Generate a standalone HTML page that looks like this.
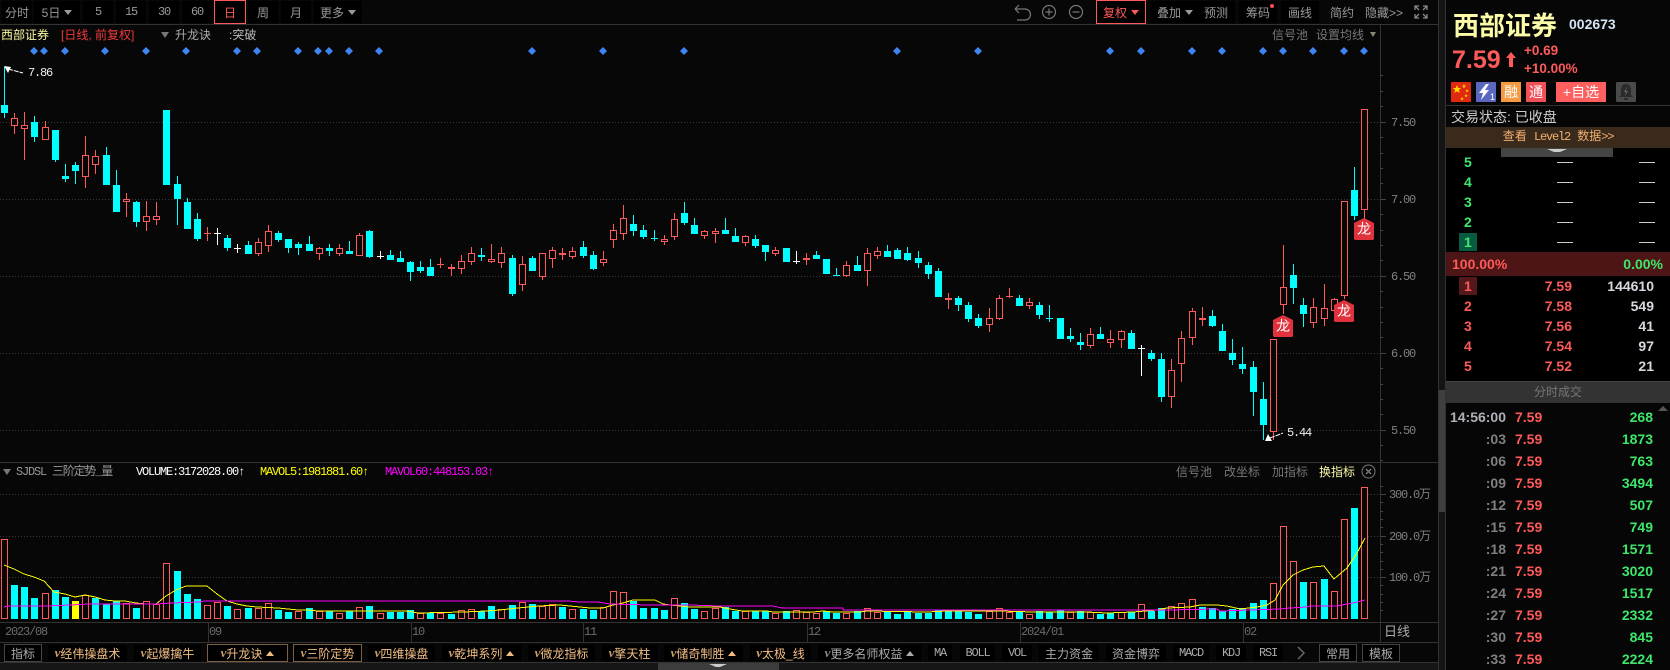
<!DOCTYPE html>
<html><head><meta charset="utf-8"><style>
html,body{margin:0;padding:0;background:#070707;width:1670px;height:670px;overflow:hidden}
body{position:relative;font-family:"Liberation Sans","WenQuanYi Zen Hei","Noto Sans CJK SC",sans-serif;font-size:12px;color:#999}
.a{position:absolute;white-space:nowrap;line-height:1}
.b{position:absolute;top:1px;height:22px;background:#000;color:#999;display:flex;align-items:center;justify-content:center;white-space:nowrap;font-size:12px}
.l{position:absolute;background:#333}
.m{font-family:"Liberation Mono","WenQuanYi Zen Hei",monospace;letter-spacing:-1.2px}
.tb{position:absolute;top:645px;height:16px;background:#000;color:#f2bd84;display:flex;align-items:center;justify-content:center;white-space:nowrap;font-size:12px;box-sizing:border-box}
.tb i{color:#c9a06a;font-weight:bold;font-size:13px;margin-right:0;font-family:"Liberation Serif",serif}
.g{color:#aaa}.g i{color:#888}
.bx{border:1px solid #7c5f3e;top:644px;height:18px}
.gb{border:1px solid #444;top:644px;height:18px;color:#aaa;background:#000}
.n{font-family:"Liberation Sans",sans-serif;font-weight:bold;font-size:14px;line-height:14px;position:absolute;white-space:nowrap}
.r{color:#ff5a5a}.gn{color:#3ee66a}.w{color:#d8d8e0}.gy{color:#808080}
.dn{display:inline-block;width:0;height:0;border-left:4px solid transparent;border-right:4px solid transparent;border-top:5px solid currentColor;margin-left:4px}
.up{display:inline-block;width:0;height:0;border-left:4px solid transparent;border-right:4px solid transparent;border-bottom:5px solid currentColor;margin-left:4px}
</style></head><body>

<!-- toolbar -->
<div class="b" style="left:2px;width:30px">分时</div>
<div class="b" style="left:34px;width:46px">5日<span class="dn"></span></div>
<div class="b m" style="left:83px;width:30px">5</div>
<div class="b m" style="left:116px;width:30px">15</div>
<div class="b m" style="left:149px;width:30px">30</div>
<div class="b m" style="left:182px;width:30px">60</div>
<div class="b" style="left:214px;width:32px;top:0;height:24px;box-sizing:border-box;border:1px solid #ff5a5a;color:#ff5a5a">日</div>
<div class="b" style="left:248px;width:30px">周</div>
<div class="b" style="left:281px;width:30px">月</div>
<div class="b" style="left:314px;width:48px">更多<span class="dn"></span></div>

<svg class="a" style="left:1008px;top:2px" width="82" height="22" fill="none" stroke="#777" stroke-width="1.200">
<path d="M7 10h10a5.500 5.500 0 0 1 0 11h-8M7 10l4-4M7 10l4 4" transform="translate(0,-3)"/>
<circle cx="41" cy="10" r="6.500"/><path d="M37.500 10h7M41 6.500v7"/>
<circle cx="68" cy="10" r="6.500"/><path d="M64.500 10h7"/>
</svg>
<div class="b" style="left:1096px;width:50px;top:0;height:24px;box-sizing:border-box;border:1px solid #ff5a5a;color:#ff5a5a">复权<span class="dn"></span></div>
<div class="b" style="left:1150px;width:50px">叠加<span class="dn"></span></div>
<div class="b" style="left:1197px;width:38px">预测</div>
<div class="b" style="left:1239px;width:38px">筹码</div>
<div class="a" style="left:1270px;top:4px;width:4px;height:4px;border-radius:2px;background:#ff4c4c"></div>
<div class="b" style="left:1281px;width:38px">画线</div>
<div class="b" style="left:1323px;width:38px;background:none">简约</div>
<div class="b" style="left:1365px;width:38px;background:none;justify-content:flex-start">隐藏&gt;&gt;</div>
<svg class="a" style="left:1414px;top:5px" width="14" height="14" fill="none" stroke="#888" stroke-width="1.300"><path d="M1 5V1h4M9 1h4v4M13 9v4H9M5 13H1V9M1 1l4 4M13 1L9 5M13 13L9 9M1 13l4-4"/></svg>

<!-- structural lines -->
<div class="l" style="left:0;top:24px;width:1438px;height:1px"></div>
<div class="l" style="left:0;top:462px;width:1438px;height:1px"></div>
<div class="l" style="left:0;top:622px;width:1438px;height:1px"></div>
<div class="l" style="left:0;top:642px;width:1438px;height:1px"></div>
<div class="l" style="left:0;top:662px;width:1438px;height:1px"></div>
<div class="l" style="left:1380px;top:25px;width:1px;height:617px"></div>
<div class="l" style="left:1438px;top:0;width:1px;height:670px"></div>
<div class="l" style="left:208px;top:622px;width:1px;height:20px"></div>
<div class="l" style="left:411px;top:622px;width:1px;height:20px"></div>
<div class="l" style="left:583px;top:622px;width:1px;height:20px"></div>
<div class="l" style="left:807px;top:622px;width:1px;height:20px"></div>
<div class="l" style="left:1020px;top:622px;width:1px;height:20px"></div>
<div class="l" style="left:1243px;top:622px;width:1px;height:20px"></div>

<!-- chart header -->
<div class="a" style="left:1px;top:29px;color:#f8f8a0">西部证券</div>
<div class="a" style="left:61px;top:29px;color:#f03a3a">[日线, 前复权]</div>
<div class="a" style="left:161px;top:32px;width:0;height:0;border-left:4px solid transparent;border-right:4px solid transparent;border-top:6px solid #777"></div>
<div class="a" style="left:175px;top:29px;color:#aaa">升龙诀</div>
<div class="a" style="left:229px;top:29px;color:#bbb">:突破</div>
<div class="a" style="left:1272px;top:29px;color:#777">信号池</div>
<div class="a" style="left:1316px;top:29px;color:#777">设置均线</div>
<div class="a" style="left:1370px;top:32px;width:0;height:0;border-left:3px solid transparent;border-right:3px solid transparent;border-top:5px solid #887"></div>

<!-- chart svg -->
<svg class="a" style="left:0;top:0" width="1438" height="670" shape-rendering="crispEdges">
<g stroke="#383838" stroke-dasharray="1 2"><path d="M0 122.500H1380M0 199.500H1380M0 276.500H1380M0 353.500H1380M0 430.500H1380M0 494.500H1380M0 536.500H1380M0 577.500H1380"/></g>
<path stroke="#444" d="M1380 122.500h6M1380 199.500h6M1380 276.500h6M1380 353.500h6M1380 430.500h6M1380 494.500h6M1380 536.500h6M1380 577.500h6M1380 75.500h3M1380 91.500h3M1380 106.500h3M1380 137.500h3M1380 153.500h3M1380 168.500h3M1380 183.500h3M1380 214.500h3M1380 230.500h3M1380 245.500h3M1380 260.500h3M1380 291.500h3M1380 307.500h3M1380 322.500h3M1380 337.500h3M1380 368.500h3M1380 384.500h3M1380 399.500h3M1380 414.500h3M1380 445.500h3M1380 460.500h3M1380 486.500h3M1380 502.500h3M1380 511.500h3M1380 519.500h3M1380 527.500h3M1380 544.500h3M1380 552.500h3M1380 561.500h3M1380 569.500h3M1380 585.500h3M1380 594.500h3M1380 602.500h3M1380 610.500h3"/>
<!-- diamonds -->
<path shape-rendering="auto" fill="#3d85f2" d="M34 47l4 4-4 4-4-4zM44 47l4 4-4 4-4-4zM65 47l4 4-4 4-4-4zM105 47l4 4-4 4-4-4zM146 47l4 4-4 4-4-4zM186 47l4 4-4 4-4-4zM237 47l4 4-4 4-4-4zM257 47l4 4-4 4-4-4zM298 47l4 4-4 4-4-4zM318 47l4 4-4 4-4-4zM329 47l4 4-4 4-4-4zM349 47l4 4-4 4-4-4zM379 47l4 4-4 4-4-4zM532 47l4 4-4 4-4-4zM603 47l4 4-4 4-4-4zM684 47l4 4-4 4-4-4zM897 47l4 4-4 4-4-4zM978 47l4 4-4 4-4-4zM1110 47l4 4-4 4-4-4zM1141 47l4 4-4 4-4-4zM1192 47l4 4-4 4-4-4zM1222 47l4 4-4 4-4-4zM1263 47l4 4-4 4-4-4zM1283 47l4 4-4 4-4-4zM1313 47l4 4-4 4-4-4zM1344 47l4 4-4 4-4-4zM1364 47l4 4-4 4-4-4z"/>
<!-- cyan candles -->
<path fill="#00ffff" d="M4 67h1V118h-1zM1 105h7V113h-7zM34 116h1V142h-1zM31 122h7V137h-7zM55 130h1V162h-1zM52 130h7V160h-7zM65 164h1V182h-1zM62 176h7V179h-7zM75 162h1V184h-1zM72 165h7V171h-7zM106 147h1V185h-1zM103 155h7V185h-7zM116 170h1V212h-1zM113 185h7V212h-7zM136 201h1V227h-1zM133 202h7V222h-7zM163 110h7V185h-7zM177 176h1V225h-1zM174 184h7V199h-7zM187 198h1V229h-1zM184 202h7V229h-7zM197 213h1V241h-1zM194 219h7V239h-7zM227 235h1V251h-1zM224 238h7V248h-7zM248 241h1V254h-1zM245 245h7V254h-7zM278 231h1V242h-1zM275 233h7V240h-7zM288 239h1V253h-1zM285 239h7V248h-7zM298 242h1V255h-1zM295 244h7V248h-7zM309 236h1V251h-1zM306 244h7V251h-7zM329 244h1V256h-1zM326 248h7V251h-7zM349 241h1V254h-1zM346 251h7V254h-7zM369 230h1V258h-1zM366 231h7V257h-7zM390 250h1V260h-1zM387 255h7V260h-7zM400 251h1V262h-1zM397 258h7V262h-7zM410 261h1V281h-1zM407 262h7V272h-7zM420 261h1V273h-1zM417 267h7V271h-7zM430 259h1V276h-1zM427 267h7V276h-7zM481 248h1V261h-1zM478 255h7V257h-7zM512 255h1V296h-1zM509 258h7V294h-7zM532 256h1V271h-1zM529 258h7V271h-7zM583 241h1V258h-1zM580 247h7V256h-7zM593 251h1V270h-1zM590 255h7V269h-7zM633 215h1V236h-1zM630 224h7V231h-7zM643 225h1V239h-1zM640 230h7V237h-7zM654 230h1V241h-1zM651 238h7V239h-7zM684 202h1V225h-1zM681 213h7V223h-7zM694 218h1V234h-1zM691 225h7V234h-7zM725 218h1V234h-1zM722 230h7V234h-7zM735 228h1V242h-1zM732 236h7V242h-7zM755 235h1V248h-1zM752 239h7V246h-7zM765 245h1V261h-1zM762 245h7V252h-7zM783 248h7V262h-7zM816 251h1V259h-1zM813 255h7V259h-7zM823 259h7V274h-7zM836 268h1V276h-1zM833 275h7V276h-7zM857 256h1V271h-1zM854 265h7V271h-7zM887 245h1V257h-1zM884 251h7V257h-7zM897 248h1V259h-1zM894 250h7V259h-7zM907 247h1V261h-1zM904 253h7V260h-7zM918 251h1V268h-1zM915 258h7V263h-7zM928 262h1V279h-1zM925 265h7V274h-7zM938 268h1V297h-1zM935 271h7V297h-7zM958 296h1V311h-1zM955 298h7V305h-7zM968 302h1V322h-1zM965 305h7V319h-7zM978 314h1V328h-1zM975 318h7V326h-7zM1019 295h1V306h-1zM1016 298h7V306h-7zM1039 302h1V319h-1zM1036 305h7V315h-7zM1049 305h1V322h-1zM1046 318h7V319h-7zM1057 318h7V339h-7zM1070 328h1V342h-1zM1067 336h7V339h-7zM1080 333h1V350h-1zM1077 342h7V345h-7zM1100 327h1V339h-1zM1097 334h7V339h-7zM1131 330h1V349h-1zM1128 333h7V349h-7zM1151 350h1V361h-1zM1148 353h7V359h-7zM1161 353h1V402h-1zM1158 359h7V397h-7zM1212 310h1V327h-1zM1209 316h7V326h-7zM1219 331h7V351h-7zM1222 324h1V331h-1zM1232 339h1V365h-1zM1229 353h7V360h-7zM1242 347h1V374h-1zM1239 364h7V369h-7zM1253 361h1V416h-1zM1250 367h7V392h-7zM1263 382h1V440h-1zM1260 399h7V425h-7zM1293 264h1V304h-1zM1290 275h7V288h-7zM1303 298h1V327h-1zM1300 305h7V314h-7zM1354 167h1V220h-1zM1351 190h7V216h-7z"/>
<!-- red wicks & dojis -->
<path fill="#ff5a5a" d="M14 113h1V134h-1zM24 112h1V160h-1zM45 121h1V140h-1zM85 136h1V188h-1zM95 150h1V174h-1zM126 193h1V217h-1zM146 201h1V231h-1zM156 202h1V225h-1zM207 227h1V241h-1zM204 233h7v1h-7zM258 238h1V256h-1zM268 225h1V252h-1zM319 247h1V260h-1zM339 244h1V256h-1zM359 233h1V256h-1zM440 258h1V268h-1zM437 264h7v1h-7zM451 264h1V276h-1zM448 267h7v2h-7zM461 255h1V274h-1zM471 247h1V265h-1zM491 244h1V263h-1zM501 247h1V268h-1zM522 256h1V291h-1zM542 253h1V280h-1zM552 247h1V268h-1zM562 248h1V260h-1zM572 247h1V259h-1zM603 251h1V266h-1zM613 224h1V248h-1zM623 205h1V240h-1zM664 235h1V245h-1zM674 213h1V240h-1zM704 230h1V239h-1zM715 228h1V243h-1zM745 235h1V246h-1zM775 247h1V256h-1zM806 253h1V265h-1zM803 258h7v2h-7zM846 261h1V277h-1zM867 248h1V286h-1zM877 247h1V259h-1zM948 293h1V309h-1zM945 298h7v2h-7zM989 308h1V332h-1zM999 295h1V320h-1zM1009 288h1V298h-1zM1006 296h7v1h-7zM1029 298h1V309h-1zM1090 328h1V348h-1zM1110 330h1V348h-1zM1121 330h1V348h-1zM1171 359h1V408h-1zM1181 331h1V382h-1zM1192 308h1V345h-1zM1202 307h1V326h-1zM1199 318h7v2h-7zM1273 432h1V440h-1zM1283 245h1V314h-1zM1313 298h1V328h-1zM1324 284h1V326h-1zM1334 298h1V311h-1zM1344 296h1V299h-1zM1364 210h1V219h-1z"/>
<!-- red bodies -->
<path fill="#070707" stroke="#ff5a5a" d="M11.500 118.500h6V125.500h-6zM21.500 125.500h6V128.500h-6zM42.500 127.500h6V139.500h-6zM82.500 155.500h6V176.500h-6zM92.500 156.500h6V164.500h-6zM123.500 199.500h6V201.500h-6zM143.500 216.500h6V221.500h-6zM153.500 216.500h6V219.500h-6zM255.500 242.500h6V253.500h-6zM265.500 231.500h6V245.500h-6zM316.500 248.500h6V253.500h-6zM336.500 248.500h6V253.500h-6zM356.500 235.500h6V255.500h-6zM458.500 261.500h6V268.500h-6zM468.500 253.500h6V261.500h-6zM488.500 259.500h6V261.500h-6zM498.500 253.500h6V262.500h-6zM519.500 264.500h6V284.500h-6zM539.500 253.500h6V276.500h-6zM549.500 250.500h6V258.500h-6zM559.500 253.500h6V254.500h-6zM569.500 251.500h6V256.500h-6zM600.500 259.500h6V262.500h-6zM610.500 230.500h6V239.500h-6zM620.500 218.500h6V233.500h-6zM661.500 239.500h6V241.500h-6zM671.500 219.500h6V236.500h-6zM701.500 231.500h6V235.500h-6zM712.500 231.500h6V233.500h-6zM742.500 236.500h6V242.500h-6zM772.500 250.500h6V253.500h-6zM843.500 265.500h6V275.500h-6zM864.500 253.500h6V270.500h-6zM874.500 251.500h6V255.500h-6zM986.500 318.500h6V324.500h-6zM996.500 298.500h6V318.500h-6zM1026.500 302.500h6V305.500h-6zM1087.500 334.500h6V345.500h-6zM1107.500 339.500h6V342.500h-6zM1118.500 331.500h6V339.500h-6zM1168.500 370.500h6V396.500h-6zM1178.500 338.500h6V363.500h-6zM1189.500 311.500h6V337.500h-6zM1270.500 339.500h6V431.500h-6zM1280.500 287.500h6V304.500h-6zM1310.500 307.500h6V322.500h-6zM1321.500 308.500h6V318.500h-6zM1331.500 299.500h6V310.500h-6zM1341.500 201.500h6V295.500h-6zM1361.500 109.500h6V209.500h-6z"/>
<!-- white dojis -->
<path fill="#fff" d="M217 228h1V245h-1zM214 233h7v1h-7zM237 244h1V253h-1zM234 248h7v1h-7zM380 251h1V259h-1zM377 256h7v1h-7zM796 251h1V264h-1zM793 261h7v1h-7zM1141 345h1V376h-1zM1138 348h7v1h-7z"/>
<!-- high/low arrows -->
<path shape-rendering="auto" fill="#fff" d="M4 66l7 1-3 6zM1265 441l3-7 4 7z"/>
<path shape-rendering="auto" stroke="#fff" fill="none" d="M8 69l15 4M1270 438l13-5" stroke-dasharray="5 1"/>

<!-- volume -->
<path fill="#00ffff" d="M11 585h7V619h-7zM21 587h7V619h-7zM31 598h7V619h-7zM52 590h7V619h-7zM62 597h7V619h-7zM92 598h7V619h-7zM103 604h7V619h-7zM113 601h7V619h-7zM133 608h7V619h-7zM174 571h7V619h-7zM184 594h7V619h-7zM194 599h7V619h-7zM224 606h7V619h-7zM245 608h7V619h-7zM275 610h7V619h-7zM285 612h7V619h-7zM306 608h7V619h-7zM326 611h7V619h-7zM346 611h7V619h-7zM366 606h7V619h-7zM387 612h7V619h-7zM397 612h7V619h-7zM407 610h7V619h-7zM427 613h7V619h-7zM448 614h7V619h-7zM478 611h7V619h-7zM488 606h7V619h-7zM509 605h7V619h-7zM529 604h7V619h-7zM559 607h7V619h-7zM580 609h7V619h-7zM590 610h7V619h-7zM630 601h7V619h-7zM640 608h7V619h-7zM651 608h7V619h-7zM661 610h7V619h-7zM681 603h7V619h-7zM691 609h7V619h-7zM722 607h7V619h-7zM732 611h7V619h-7zM752 611h7V619h-7zM762 611h7V619h-7zM783 611h7V619h-7zM823 611h7V619h-7zM833 613h7V619h-7zM854 611h7V619h-7zM884 611h7V619h-7zM894 614h7V619h-7zM904 611h7V619h-7zM915 613h7V619h-7zM925 613h7V619h-7zM935 610h7V619h-7zM945 610h7V619h-7zM955 611h7V619h-7zM965 612h7V619h-7zM975 614h7V619h-7zM1016 611h7V619h-7zM1036 611h7V619h-7zM1046 612h7V619h-7zM1057 610h7V619h-7zM1077 611h7V619h-7zM1097 614h7V619h-7zM1107 613h7V619h-7zM1128 612h7V619h-7zM1148 611h7V619h-7zM1158 608h7V619h-7zM1199 607h7V619h-7zM1209 608h7V619h-7zM1219 611h7V619h-7zM1229 609h7V619h-7zM1239 608h7V619h-7zM1250 603h7V619h-7zM1260 600h7V619h-7zM1300 582h7V619h-7zM1321 579h7V619h-7zM1351 508h7V619h-7z"/>
<path fill="#ffff00" d="M72 601h7V619h-7z"/>
<path fill="#070707" stroke="#ff5a5a" d="M1.500 539.500h6V618.500h-6zM42.500 593.500h6V618.500h-6zM82.500 595.500h6V618.500h-6zM123.500 603.500h6V618.500h-6zM143.500 601.500h6V618.500h-6zM153.500 604.500h6V618.500h-6zM163.500 563.500h6V618.500h-6zM204.500 605.500h6V618.500h-6zM214.500 602.500h6V618.500h-6zM234.500 609.500h6V618.500h-6zM255.500 608.500h6V618.500h-6zM265.500 603.500h6V618.500h-6zM295.500 611.500h6V618.500h-6zM316.500 611.500h6V618.500h-6zM336.500 613.500h6V618.500h-6zM356.500 607.500h6V618.500h-6zM377.500 613.500h6V618.500h-6zM417.500 613.500h6V618.500h-6zM437.500 613.500h6V618.500h-6zM458.500 610.500h6V618.500h-6zM468.500 609.500h6V618.500h-6zM498.500 609.500h6V618.500h-6zM519.500 602.500h6V618.500h-6zM539.500 606.500h6V618.500h-6zM549.500 604.500h6V618.500h-6zM569.500 609.500h6V618.500h-6zM600.500 607.500h6V618.500h-6zM610.500 591.500h6V618.500h-6zM620.500 592.500h6V618.500h-6zM671.500 598.500h6V618.500h-6zM701.500 611.500h6V618.500h-6zM712.500 608.500h6V618.500h-6zM742.500 611.500h6V618.500h-6zM772.500 613.500h6V618.500h-6zM793.500 610.500h6V618.500h-6zM803.500 612.500h6V618.500h-6zM813.500 613.500h6V618.500h-6zM843.500 613.500h6V618.500h-6zM864.500 608.500h6V618.500h-6zM874.500 612.500h6V618.500h-6zM986.500 611.500h6V618.500h-6zM996.500 608.500h6V618.500h-6zM1006.500 612.500h6V618.500h-6zM1026.500 614.500h6V618.500h-6zM1067.500 612.500h6V618.500h-6zM1087.500 612.500h6V618.500h-6zM1118.500 612.500h6V618.500h-6zM1138.500 604.500h6V618.500h-6zM1168.500 606.500h6V618.500h-6zM1178.500 603.500h6V618.500h-6zM1189.500 599.500h6V618.500h-6zM1270.500 583.500h6V618.500h-6zM1280.500 526.500h6V618.500h-6zM1290.500 561.500h6V618.500h-6zM1310.500 582.500h6V618.500h-6zM1331.500 591.500h6V618.500h-6zM1341.500 519.500h6V618.500h-6zM1361.500 487.500h6V618.500h-6z"/>
<polyline fill="none" stroke="#ffff00" points="4,565 14,569 24,574 34,577 44,581 54,592 65,594 75,597 85,595 95,597 105,600 115,601 125,601 136,603 146,604 156,604 166,596 176,590 186,586 207,586 217,594 227,601 237,604 247,606 257,607 278,608 288,609 298,610 308,610 318,611 368,611 407,611 418,613 464,612 486,611 500,610 518,608 539,606 560,605 570,606 580,607 590,608 603,608 613,605 623,603 633,600 655,600 663,604 670,605 690,607 720,607 730,609 742,611 767,611 773,612 813,612 823,611 833,612 860,612 867,611 927,612 947,611 980,611 1000,611 1033,612 1047,612 1087,612 1107,613 1133,612 1157,610 1167,608 1190,607 1200,605 1217,605 1227,606 1240,609 1257,607 1267,605 1275,600 1283,585 1293,575 1303,570 1313,567 1324,566 1334,579 1347,568 1357,553 1365,538"/>
<polyline fill="none" stroke="#ff00ff" points="4,607 9,606 46,606 71,605 89,604 157,604 171,603 200,602 204,601 560,601 568,601 580,602 598,602 610,604 650,605 690,605 720,606 773,606 782,608 843,608 843,610 1157,610 1167,610 1217,609 1220,611 1280,609 1290,608 1307,607 1310,606 1337,606 1347,604 1353,603 1365,600"/>
<!-- 龙 badges -->
<path shape-rendering="auto" fill="#e0323c" d="M1283 315l10 5v16l-1 1h-18l-1-1v-16zM1344 300l10 5v16l-1 1h-18l-1-1v-16zM1364 218l10 5v16l-1 1h-18l-1-1v-16z"/>
<!-- bottom scrollbar -->
<rect x="0" y="663" width="658" height="7" fill="#161616"/><rect x="779" y="663" width="659" height="7" fill="#161616"/>
<rect x="658" y="663" width="121" height="7" fill="#3c3c3c"/>
<path shape-rendering="auto" fill="#ccc" d="M709 664h18l-7 3h-4z"/>
</svg>

<div class="a" style="left:1276px;top:319px;color:#fff;font-size:14px">龙</div>
<div class="a" style="left:1337px;top:304px;color:#fff;font-size:14px">龙</div>
<div class="a" style="left:1357px;top:222px;color:#fff;font-size:14px">龙</div>

<div class="a m" style="left:28px;top:67px;color:#eee;">7.86</div>
<div class="a m" style="left:1287px;top:427px;color:#eee;">5.44</div>

<!-- axis labels -->
<div class="a m" style="left:1391px;top:117px;color:#808080">7.50</div>
<div class="a m" style="left:1391px;top:194px;color:#808080">7.00</div>
<div class="a m" style="left:1391px;top:271px;color:#808080">6.50</div>
<div class="a m" style="left:1391px;top:348px;color:#808080">6.00</div>
<div class="a m" style="left:1391px;top:425px;color:#808080">5.50</div>
<div class="a m" style="left:1389px;top:489px;color:#808080">300.0万</div>
<div class="a m" style="left:1389px;top:531px;color:#808080">200.0万</div>
<div class="a m" style="left:1389px;top:572px;color:#808080">100.0万</div>

<!-- volume header -->
<div class="a" style="left:3px;top:469px;width:0;height:0;border-left:4px solid transparent;border-right:4px solid transparent;border-top:6px solid #777"></div>
<div class="a m" style="left:16px;top:466px;color:#999">SJDSL 三阶定势_量</div>
<div class="a m" style="left:136px;top:466px;color:#fff">VOLUME:3172028.00↑</div>
<div class="a m" style="left:260px;top:466px;color:#ffff00">MAVOL5:1981881.60↑</div>
<div class="a m" style="left:385px;top:466px;color:#ff00ff">MAVOL60:448153.03↑</div>
<div class="a" style="left:1176px;top:466px;color:#777">信号池</div>
<div class="a" style="left:1224px;top:466px;color:#777">改坐标</div>
<div class="a" style="left:1272px;top:466px;color:#777">加指标</div>
<div class="a" style="left:1319px;top:466px;color:#f8f8a8">换指标</div>
<svg class="a" style="left:1361px;top:464px" width="15" height="15" fill="none" stroke="#777"><circle cx="7.500" cy="7.500" r="6.500"/><path d="M5 5l5 5M10 5l-5 5" stroke-width="1.500"/></svg>

<!-- date axis -->
<div class="a m" style="left:5px;top:626px;color:#6c6c6c">2023/08</div>
<div class="a m" style="left:209px;top:626px;color:#6c6c6c">09</div>
<div class="a m" style="left:412px;top:626px;color:#6c6c6c">10</div>
<div class="a m" style="left:584px;top:626px;color:#6c6c6c">11</div>
<div class="a m" style="left:808px;top:626px;color:#6c6c6c">12</div>
<div class="a m" style="left:1021px;top:626px;color:#6c6c6c">2024/01</div>
<div class="a m" style="left:1244px;top:626px;color:#6c6c6c">02</div>
<div class="a" style="left:1384px;top:625px;color:#aaa;font-size:13px">日线</div>

<!-- tabs -->
<div class="tb gb" style="left:4px;width:38px">指标</div>
<div class="tb" style="left:48px;width:79px"><i>v</i>经伟操盘术</div>
<div class="tb" style="left:134px;width:67px"><i>v</i>起爆擒牛</div>
<div class="tb bx" style="left:207px;width:81px"><i>v</i>升龙诀<span class="up"></span></div>
<div class="tb bx" style="left:293px;width:69px"><i>v</i>三阶定势</div>
<div class="tb" style="left:368px;width:67px"><i>v</i>四维操盘</div>
<div class="tb" style="left:442px;width:79px"><i>v</i>乾坤系列<span class="up"></span></div>
<div class="tb" style="left:528px;width:67px"><i>v</i>微龙指标</div>
<div class="tb" style="left:602px;width:55px"><i>v</i>擎天柱</div>
<div class="tb" style="left:664px;width:79px"><i>v</i>储奇制胜<span class="up"></span></div>
<div class="tb" style="left:750px;width:61px"><i>v</i>太极_线</div>
<div class="tb g" style="left:818px;width:103px"><i>v</i>更多名师权益<span class="up"></span></div>
<div class="tb g m" style="left:928px;width:24px">MA</div>
<div class="tb g m" style="left:960px;width:35px">BOLL</div>
<div class="tb g m" style="left:1002px;width:30px">VOL</div>
<div class="tb g" style="left:1039px;width:60px">主力资金</div>
<div class="tb g" style="left:1106px;width:60px">资金博弈</div>
<div class="tb g m" style="left:1173px;width:36px">MACD</div>
<div class="tb g m" style="left:1216px;width:30px">KDJ</div>
<div class="tb g m" style="left:1253px;width:30px">RSI</div>
<svg class="a" style="left:1296px;top:646px" width="10" height="14" fill="none" stroke="#666" stroke-width="1.500"><path d="M2 1l6 6-6 6"/></svg>
<div class="tb gb" style="left:1319px;width:38px">常用</div>
<div class="tb gb" style="left:1362px;width:38px">模板</div>

<!-- vertical strip -->
<div class="a" style="left:1439px;top:0;width:6px;height:670px;background:#141414"></div>
<div class="a" style="left:1439px;top:390px;width:6px;height:122px;background:#3f3f3f"></div>
<div class="l" style="left:1445px;top:0;width:1px;height:670px"></div>

<!-- sidebar -->
<div class="a" style="left:1446px;top:0;width:224px;height:670px;background:#060606"></div>
<div class="a" style="left:1453px;top:12px;font-size:26px;font-weight:bold;color:#fbfba8;font-family:'Noto Sans CJK SC','WenQuanYi Zen Hei',sans-serif">西部证券</div>
<div class="n" style="left:1569px;top:17px;color:#d4e4f4">002673</div>
<div class="a" style="left:1452px;top:48px;font-size:25px;font-weight:bold;color:#ff5a5a">7.59</div>
<svg class="a" style="left:1505px;top:52px" width="12" height="16"><path fill="#ff5a5a" d="M6 0l5 6H8v9H4V6H1z"/></svg>
<div class="n r" style="left:1524px;top:44px;font-size:13.500px">+0.69</div>
<div class="n r" style="left:1524px;top:62px;font-size:13.500px">+10.00%</div>

<svg class="a" style="left:1451px;top:82px" width="20" height="20"><rect width="20" height="20" fill="#e02a10" rx="1"/><path fill="#ffd800" d="M6 3l1.200 3h3L7.800 8l1 3L6 9.200 3.200 11l1-3L1.800 6h3zM13 2l.6 1.500h1.400l-1.100 1 .4 1.500-1.300-.9-1.300.9.400-1.500-1.100-1H12.400zM16 7l.5 1.200h1.300l-1 .8.400 1.300-1.200-.8-1.100.8.400-1.300-1-.8h1.300zM15 12l.5 1.200h1.300l-1 .8.400 1.300-1.200-.8-1.100.8.400-1.300-1-.8h1.300zM11 15l.5 1.200h1.300l-1 .8.400 1.300-1.200-.8-1.100.8.400-1.300-1-.8h1.300z"/></svg>
<svg class="a" style="left:1476px;top:82px" width="20" height="20"><rect width="20" height="20" fill="#5b68c0" rx="1"/><path fill="#fff" d="M10 2L3 11h4l-2 7 8-10H9l4-6z"/><text x="14" y="18" font-size="9" fill="#fff" font-family="Liberation Sans">1</text></svg>
<div class="a" style="left:1501px;top:82px;width:20px;height:20px;background:#f59a40;color:#fff;text-align:center;line-height:20px;font-size:14px">融</div>
<div class="a" style="left:1526px;top:82px;width:20px;height:20px;background:#f05058;color:#fff;text-align:center;line-height:20px;font-size:14px">通</div>
<div class="a" style="left:1556px;top:82px;width:50px;height:20px;background:#ff5f5f;color:#fff;text-align:center;line-height:20px;font-size:14px">+自选</div>
<svg class="a" style="left:1616px;top:82px" width="20" height="20"><rect width="20" height="20" fill="#4a4a4a" rx="1"/><path fill="#2b2b2b" d="M10 2c4 0 5 3 5 7v4l2 2H3l2-2V9c0-4 1-7 5-7zM8 16h4v2H8z"/><path fill="#666" d="M11 5L8 10h2l-1 4 3-5h-2z"/></svg>

<div class="l" style="left:1446px;top:105px;width:224px;height:1px"></div>
<div class="a" style="left:1451px;top:110px;font-size:14px;color:#ccc">交易状态: 已收盘</div>
<div class="a" style="left:1446px;top:127px;width:224px;height:21px;background:#3a2a1c;text-align:center;line-height:21px;color:#f2b070;font-family:'Liberation Mono','WenQuanYi Zen Hei',monospace;letter-spacing:0">查看 <span class="m">Level2</span> 数据<span class="m">&gt;&gt;</span></div>
<div class="a" style="left:1446px;top:148px;width:224px;height:104px;background:#000"></div>
<div class="a" style="left:1501px;top:148px;width:112px;height:9px;background:#444"></div>
<svg class="a" style="left:1547px;top:149px" width="20" height="6"><path fill="#ccc" d="M0 0h20l-7 3H7z"/></svg>

<div class="n gn" style="left:1464px;top:155px">5</div><div class="a" style="left:1557px;top:162px;width:16px;height:1px;background:#ccc"></div><div class="a" style="left:1639px;top:162px;width:16px;height:1px;background:#ccc"></div>
<div class="n gn" style="left:1464px;top:175px">4</div><div class="a" style="left:1557px;top:182px;width:16px;height:1px;background:#ccc"></div><div class="a" style="left:1639px;top:182px;width:16px;height:1px;background:#ccc"></div>
<div class="n gn" style="left:1464px;top:195px">3</div><div class="a" style="left:1557px;top:202px;width:16px;height:1px;background:#ccc"></div><div class="a" style="left:1639px;top:202px;width:16px;height:1px;background:#ccc"></div>
<div class="n gn" style="left:1464px;top:215px">2</div><div class="a" style="left:1557px;top:222px;width:16px;height:1px;background:#ccc"></div><div class="a" style="left:1639px;top:222px;width:16px;height:1px;background:#ccc"></div>
<div class="a" style="left:1459px;top:233px;width:18px;height:18px;background:#075a40"></div>
<div class="n gn" style="left:1464px;top:235px">1</div><div class="a" style="left:1557px;top:242px;width:16px;height:1px;background:#ccc"></div><div class="a" style="left:1639px;top:242px;width:16px;height:1px;background:#ccc"></div>

<div class="a" style="left:1446px;top:252px;width:224px;height:24px;background:#4d1515"></div>
<div class="n r" style="left:1452px;top:257px">100.00%</div>
<div class="n gn" style="right:7px;top:257px">0.00%</div>

<div class="a" style="left:1446px;top:276px;width:224px;height:105px;background:#000"></div>
<div class="a" style="left:1459px;top:277px;width:18px;height:18px;background:#52181c"></div>
<div class="n r" style="left:1464px;top:279px">1</div><div class="n r" style="right:98px;top:279px">7.59</div><div class="n w" style="right:16px;top:279px">144610</div>
<div class="n r" style="left:1464px;top:299px">2</div><div class="n r" style="right:98px;top:299px">7.58</div><div class="n w" style="right:16px;top:299px">549</div>
<div class="n r" style="left:1464px;top:319px">3</div><div class="n r" style="right:98px;top:319px">7.56</div><div class="n w" style="right:16px;top:319px">41</div>
<div class="n r" style="left:1464px;top:339px">4</div><div class="n r" style="right:98px;top:339px">7.54</div><div class="n w" style="right:16px;top:339px">97</div>
<div class="n r" style="left:1464px;top:359px">5</div><div class="n r" style="right:98px;top:359px">7.52</div><div class="n w" style="right:16px;top:359px">21</div>

<div class="a" style="left:1446px;top:381px;width:224px;height:22px;background:#333;border-top:1px solid #444;box-sizing:border-box;text-align:center;line-height:21px;color:#777">分时成交</div>
<svg class="a" style="left:1658px;top:406px" width="10" height="6"><path fill="#555" d="M5 0l5 5H0z"/></svg>

<div class="n" style="right:164px;top:410px;color:#b0b0b8">14:56:00</div><div class="n r" style="left:1515px;top:410px">7.59</div><div class="n gn" style="right:17px;top:410px">268</div>
<div class="n gy" style="right:164px;top:432px">:03</div><div class="n r" style="left:1515px;top:432px">7.59</div><div class="n gn" style="right:17px;top:432px">1873</div>
<div class="n gy" style="right:164px;top:454px">:06</div><div class="n r" style="left:1515px;top:454px">7.59</div><div class="n gn" style="right:17px;top:454px">763</div>
<div class="n gy" style="right:164px;top:476px">:09</div><div class="n r" style="left:1515px;top:476px">7.59</div><div class="n gn" style="right:17px;top:476px">3494</div>
<div class="n gy" style="right:164px;top:498px">:12</div><div class="n r" style="left:1515px;top:498px">7.59</div><div class="n gn" style="right:17px;top:498px">507</div>
<div class="n gy" style="right:164px;top:520px">:15</div><div class="n r" style="left:1515px;top:520px">7.59</div><div class="n gn" style="right:17px;top:520px">749</div>
<div class="n gy" style="right:164px;top:542px">:18</div><div class="n r" style="left:1515px;top:542px">7.59</div><div class="n gn" style="right:17px;top:542px">1571</div>
<div class="n gy" style="right:164px;top:564px">:21</div><div class="n r" style="left:1515px;top:564px">7.59</div><div class="n gn" style="right:17px;top:564px">3020</div>
<div class="n gy" style="right:164px;top:586px">:24</div><div class="n r" style="left:1515px;top:586px">7.59</div><div class="n gn" style="right:17px;top:586px">1517</div>
<div class="n gy" style="right:164px;top:608px">:27</div><div class="n r" style="left:1515px;top:608px">7.59</div><div class="n gn" style="right:17px;top:608px">2332</div>
<div class="n gy" style="right:164px;top:630px">:30</div><div class="n r" style="left:1515px;top:630px">7.59</div><div class="n gn" style="right:17px;top:630px">845</div>
<div class="n gy" style="right:164px;top:652px">:33</div><div class="n r" style="left:1515px;top:652px">7.59</div><div class="n gn" style="right:17px;top:652px">2224</div>

</body></html>
